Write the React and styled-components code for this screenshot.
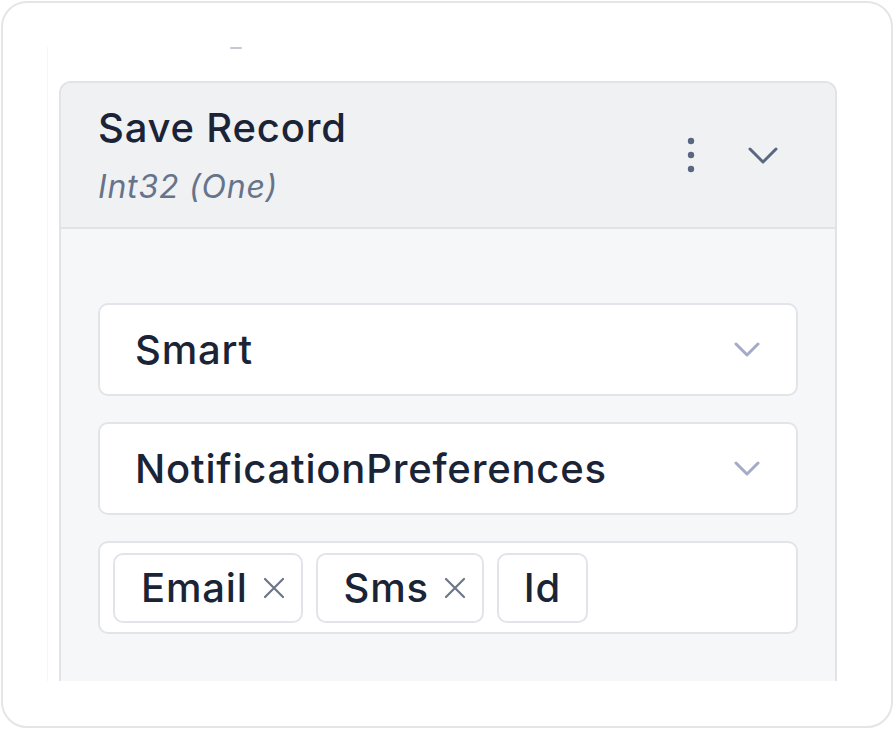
import React from 'react'
import styled, { createGlobalStyle } from 'styled-components'

const Global = createGlobalStyle`
  html, body { margin: 0; padding: 0; background: #fff; }
  body { font-family: Inter, "Noto Sans", sans-serif; color: #1b2437; }
`

const Card = styled.div`
  margin: 1px;
  width: 892px;
  height: 727px;
  box-sizing: border-box;
  border: 2px solid #e3e5e9;
  border-radius: 26px;
  background: #fff;
  overflow: hidden;
`

const Scroller = styled.div`
  margin: 44px 0 0 44px;
  height: 634px;
  overflow: hidden;
  border-left: 1px solid #f5f6f8;
  padding-left: 11px;
  position: relative;
`

const Peek = styled.div`
  position: absolute;
  top: 0;
  left: 182px;
  width: 12px;
  height: 2px;
  background: #c3c8d0;
  border-radius: 1px;
`

const Panel = styled.div`
  margin-top: 34px;
  width: 778px;
  box-sizing: border-box;
  border: 2px solid #e1e3e8;
  border-bottom: none;
  border-radius: 12px 12px 0 0;
  overflow: hidden;
  background: #f6f7f9;
`

const Header = styled.div`
  display: flex;
  align-items: center;
  justify-content: space-between;
  height: 146px;
  box-sizing: border-box;
  padding: 0 57px 0 37px;
  background: #f0f1f3;
  border-bottom: 2px solid #e1e3e8;
`

const Titles = styled.div`
  display: flex;
  flex-direction: column;
  gap: 17px;
`

const Title = styled.div`
  font-size: 40px;
  font-weight: 500;
  line-height: 46px;
  letter-spacing: 0.8px;
  color: #1b2437;
`

const Subtitle = styled.div`
  font-size: 32px;
  font-style: italic;
  line-height: 38px;
  letter-spacing: 0.8px;
  color: #66748b;
`

const Actions = styled.div`
  display: flex;
  align-items: center;
  gap: 53px;
  color: #5a6780;
`

const Body = styled.div`
  display: flex;
  flex-direction: column;
  gap: 26px;
  padding: 74px 37px 60px 37px;
`

const Select = styled.div`
  display: flex;
  align-items: center;
  justify-content: space-between;
  height: 93px;
  box-sizing: border-box;
  padding: 0 36px 0 35px;
  background: #fff;
  border: 2px solid #e2e4ea;
  border-radius: 10px;
  font-size: 40px;
  font-weight: 500;
  letter-spacing: 0.8px;
  color: #1b2437;
`

const TagBox = styled.div`
  display: flex;
  align-items: center;
  gap: 13px;
  height: 93px;
  box-sizing: border-box;
  padding: 0 13px;
  background: #fff;
  border: 2px solid #e2e4ea;
  border-radius: 10px;
`

const Tag = styled.div`
  display: flex;
  align-items: center;
  gap: 14px;
  height: 70px;
  box-sizing: border-box;
  padding: 0 ${p => (p.$removable ? 15 : 25)}px 0 ${p => (p.$removable ? 26 : 25)}px;
  border: 2px solid #e2e4ea;
  border-radius: 10px;
  font-size: 40px;
  font-weight: 500;
  letter-spacing: 0.8px;
  color: #1b2437;
`

const Chevron = ({ color, w, h, width }) => (
  <svg width={w} height={h} viewBox={`0 0 ${w} ${h}`} fill="none" stroke={color} strokeWidth={width} strokeLinecap="round" strokeLinejoin="round">
    <path d={`M2 2L${w / 2} ${h - 2}L${w - 2} 2`} />
  </svg>
)

const Dots = () => (
  <svg width="8" height="36" viewBox="0 0 8 36" fill="#5a6780">
    <circle cx="4" cy="4" r="3.2" />
    <circle cx="4" cy="18" r="3.2" />
    <circle cx="4" cy="32" r="3.2" />
  </svg>
)

const Cross = () => (
  <svg width="24" height="24" viewBox="0 0 24 24" stroke="#6b7689" strokeWidth="2.2" strokeLinecap="round">
    <path d="M3 3l18 18M21 3L3 21" />
  </svg>
)

export default function App() {
  return (
    <>
      <Global />
      <Card>
        <Scroller>
          <Peek />
          <Panel>
            <Header>
              <Titles>
                <Title>Save Record</Title>
                <Subtitle>Int32 (One)</Subtitle>
              </Titles>
              <Actions>
                <Dots />
                <Chevron color="#5a6780" w={30} h={17} width={3} />
              </Actions>
            </Header>
            <Body>
              <Select>
                Smart
                <Chevron color="#a3abc8" w={26} h={15} width={3} />
              </Select>
              <Select>
                NotificationPreferences
                <Chevron color="#a3abc8" w={26} h={15} width={3} />
              </Select>
              <TagBox>
                <Tag $removable>Email <Cross /></Tag>
                <Tag $removable>Sms <Cross /></Tag>
                <Tag>Id</Tag>
              </TagBox>
            </Body>
          </Panel>
        </Scroller>
      </Card>
    </>
  )
}
